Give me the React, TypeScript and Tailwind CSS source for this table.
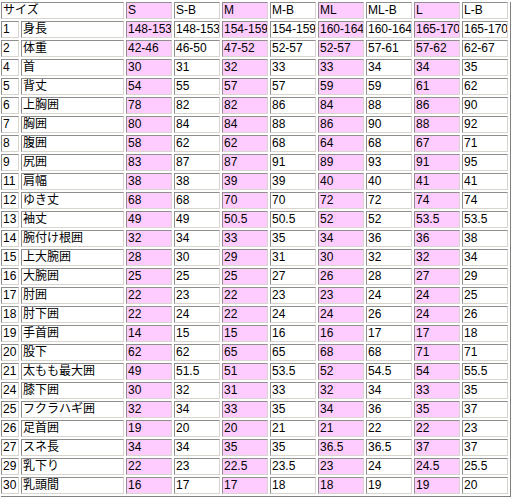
const sizes = ["S", "S-B", "M", "M-B", "ML", "ML-B", "L", "L-B"];

const rows: [string, string, string[]][] = [
  ["1", "身長", ["148-153", "148-153", "154-159", "154-159", "160-164", "160-164", "165-170", "165-170"]],
  ["2", "体重", ["42-46", "46-50", "47-52", "52-57", "52-57", "57-61", "57-62", "62-67"]],
  ["4", "首", ["30", "31", "32", "33", "33", "34", "34", "35"]],
  ["5", "背丈", ["54", "55", "57", "57", "59", "59", "61", "62"]],
  ["6", "上胸囲", ["78", "82", "82", "86", "84", "88", "86", "90"]],
  ["7", "胸囲", ["80", "84", "84", "88", "86", "90", "88", "92"]],
  ["8", "腹囲", ["58", "62", "62", "68", "64", "68", "67", "71"]],
  ["9", "尻囲", ["83", "87", "87", "91", "89", "93", "91", "95"]],
  ["11", "肩幅", ["38", "38", "39", "39", "40", "40", "41", "41"]],
  ["12", "ゆき丈", ["68", "68", "70", "70", "72", "72", "74", "74"]],
  ["13", "袖丈", ["49", "49", "50.5", "50.5", "52", "52", "53.5", "53.5"]],
  ["14", "腕付け根囲", ["32", "34", "33", "35", "34", "36", "36", "38"]],
  ["15", "上大腕囲", ["28", "30", "29", "31", "30", "32", "32", "34"]],
  ["16", "大腕囲", ["25", "25", "25", "27", "26", "28", "27", "29"]],
  ["17", "肘囲", ["22", "23", "22", "23", "23", "24", "24", "25"]],
  ["18", "肘下囲", ["22", "24", "22", "24", "24", "26", "24", "26"]],
  ["19", "手首囲", ["14", "15", "15", "16", "16", "17", "17", "18"]],
  ["20", "股下", ["62", "62", "65", "65", "68", "68", "71", "71"]],
  ["21", "太もも最大囲", ["49", "51.5", "51", "53.5", "52", "54.5", "54", "55.5"]],
  ["24", "膝下囲", ["30", "32", "31", "33", "32", "34", "33", "35"]],
  ["25", "フクラハギ囲", ["32", "34", "33", "35", "34", "36", "35", "37"]],
  ["26", "足首囲", ["19", "20", "20", "21", "21", "22", "22", "23"]],
  ["27", "スネ長", ["34", "34", "35", "35", "36.5", "36.5", "37", "37"]],
  ["29", "乳下り", ["22", "23", "22.5", "23.5", "23", "24", "24.5", "25.5"]],
  ["30", "乳頭間", ["16", "17", "17", "18", "18", "19", "19", "20"]],
];

const cellBase =
  "h-[17px] border border-t-[#8e8e8e] border-l-[#8e8e8e] border-b-[#d8d5cf] border-r-[#d8d5cf] px-px leading-[15px] whitespace-nowrap overflow-hidden";

function Cell({ text, pink, span }: { text: string; pink?: boolean; span?: boolean }) {
  return (
    <div className={`${cellBase} ${pink ? "bg-[#ffccff]" : "bg-white"} ${span ? "col-span-2" : ""}`}>
      {text}
    </div>
  );
}

export default function App() {
  return (
    <div
      className="min-h-screen bg-white pl-px pt-px text-[12px] text-black"
      style={{ fontFamily: '"Liberation Sans", "Noto Sans CJK JP", sans-serif' }}
    >
      <div className="inline-block border-r border-b border-[#808080] pr-[2px] pb-[2px]">
        <div className="grid grid-cols-[18px_103px_repeat(8,46px)] gap-[2px]">
          <Cell text="サイズ" span />
          {sizes.map((s, i) => (
            <Cell key={s} text={s} pink={i % 2 === 0} />
          ))}
          {rows.map(([no, name, vals]) => (
            <div key={no} className="contents">
              <Cell text={no} />
              <Cell text={name} />
              {vals.map((v, i) => (
                <Cell key={i} text={v} pink={i % 2 === 0} />
              ))}
            </div>
          ))}
        </div>
      </div>
    </div>
  );
}
